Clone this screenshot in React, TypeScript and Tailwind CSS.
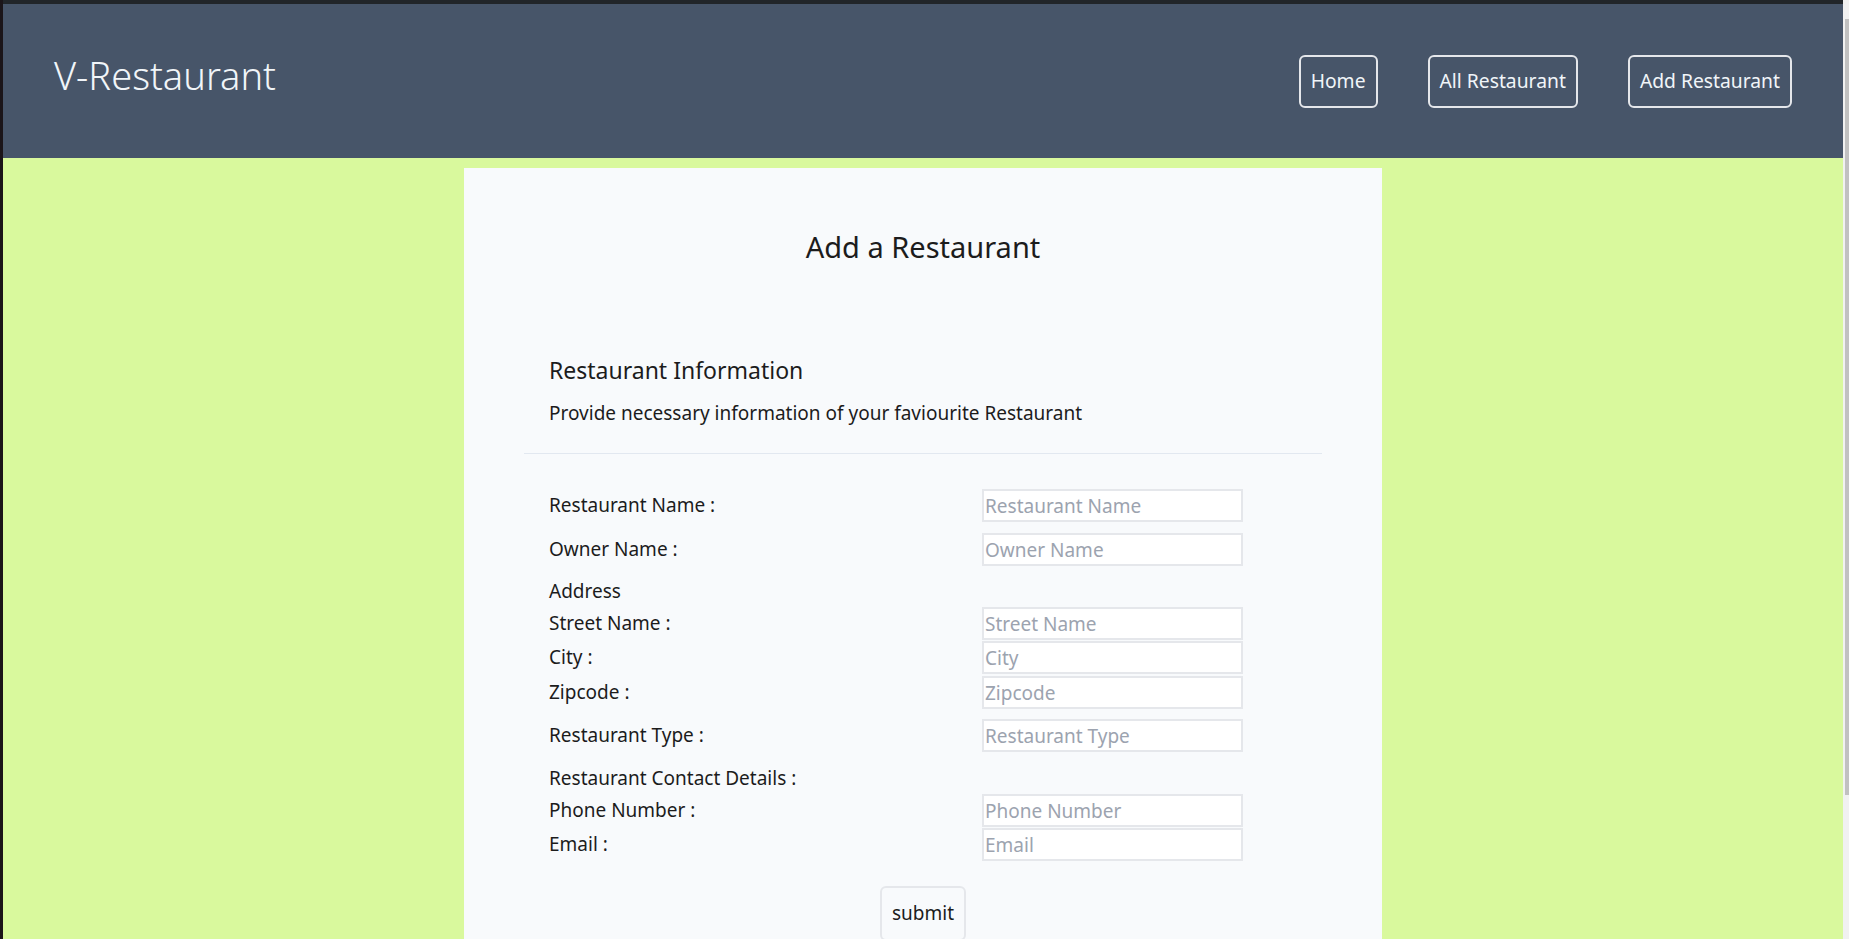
import type { ReactNode } from 'react'

const navLinks = ['Home', 'All Restaurant', 'Add Restaurant']

function Field({ label, placeholder, className = '' }: { label: string; placeholder: string; className?: string }) {
  return (
    <div className={`grid grid-cols-[433px_261px] items-baseline ${className}`}>
      <label className="-translate-y-px">{label}</label>
      <input
        placeholder={placeholder}
        className="h-[33px] w-[261px] border-2 border-[#e5e7eb] bg-white px-[1px] text-[19px] outline-none placeholder:text-[#9ca3af]"
      />
    </div>
  )
}

function Line({ children, className = '' }: { children: ReactNode; className?: string }) {
  return <div className={`leading-[28px] ${className}`}>{children}</div>
}

export default function App() {
  return (
    <div className="flex h-[939px] overflow-hidden font-['Noto_Sans',sans-serif] text-[19px] text-[#1c1c1c]">
      <div className="w-[3px] shrink-0 bg-[#1b1519]" />

      <div className="flex min-w-0 flex-1 flex-col">
        <div className="h-[4px] shrink-0 bg-[#212529]" />

        <header className="flex h-[154px] shrink-0 items-center justify-between bg-[#475569] px-[51px]">
          <h1 className="mb-3 text-[38px] font-light leading-[52px] text-[#f1f5f9]">V-Restaurant</h1>
          <nav className="flex gap-[50px]">
            {navLinks.map(link => (
              <a
                key={link}
                href="#"
                className="flex h-[53px] items-center rounded-md border-2 border-[#e5e7eb] px-[10px] text-[19.3px] text-[#f1f5f9]"
              >
                {link}
              </a>
            ))}
          </nav>
        </header>

        <main className="min-h-0 flex-1 overflow-hidden bg-[#d9f99d] pt-[10px]">
          <div className="mx-auto w-[918px] bg-[#f8fafc] pb-16 pt-[59px]">
            <h2 className="text-center text-[29px] font-normal leading-[40px]">Add a Restaurant</h2>

            <div className="mt-[87px] px-[60px]">
              <div className="pl-[25px]">
                <h3 className="text-[23px] leading-[32px]">Restaurant Information</h3>
                <p className="mt-[13px] leading-[28px]">Provide necessary information of your faviourite Restaurant</p>
              </div>
              <hr className="mt-[26px] border-t border-[#e2e8f0]" />

              <form className="mt-[35px] pl-[25px]" onSubmit={e => e.preventDefault()}>
                <Field label="Restaurant Name :" placeholder="Restaurant Name" />
                <Field label="Owner Name :" placeholder="Owner Name" className="mt-[11px]" />

                <Line className="mt-[11px]">Address</Line>
                <Field label="Street Name :" placeholder="Street Name" className="mt-[2px]" />
                <Field label="City :" placeholder="City" className="mt-[1px]" />
                <Field label="Zipcode :" placeholder="Zipcode" className="mt-[2px]" />

                <Field label="Restaurant Type :" placeholder="Restaurant Type" className="mt-[10px]" />

                <Line className="mt-[12px]">Restaurant Contact Details :</Line>
                <Field label="Phone Number :" placeholder="Phone Number" className="mt-[2px]" />
                <Field label="Email :" placeholder="Email" className="mt-[1px]" />

                <div className="mt-[25px] flex justify-center pr-[25px]">
                  <button
                    type="submit"
                    className="rounded-md border-2 border-[#e5e7eb] bg-[#f8fafc] px-[10px] pb-[12px] pt-[11px] leading-[28px]"
                  >
                    submit
                  </button>
                </div>
              </form>
            </div>
          </div>
        </main>
      </div>

      <div className="flex w-[6px] shrink-0 flex-col bg-[#f1f1f1] pt-[19px]">
        <div className="ml-[2px] h-[776px] w-[4px] bg-[#c1c1c1]" />
      </div>
    </div>
  )
}
